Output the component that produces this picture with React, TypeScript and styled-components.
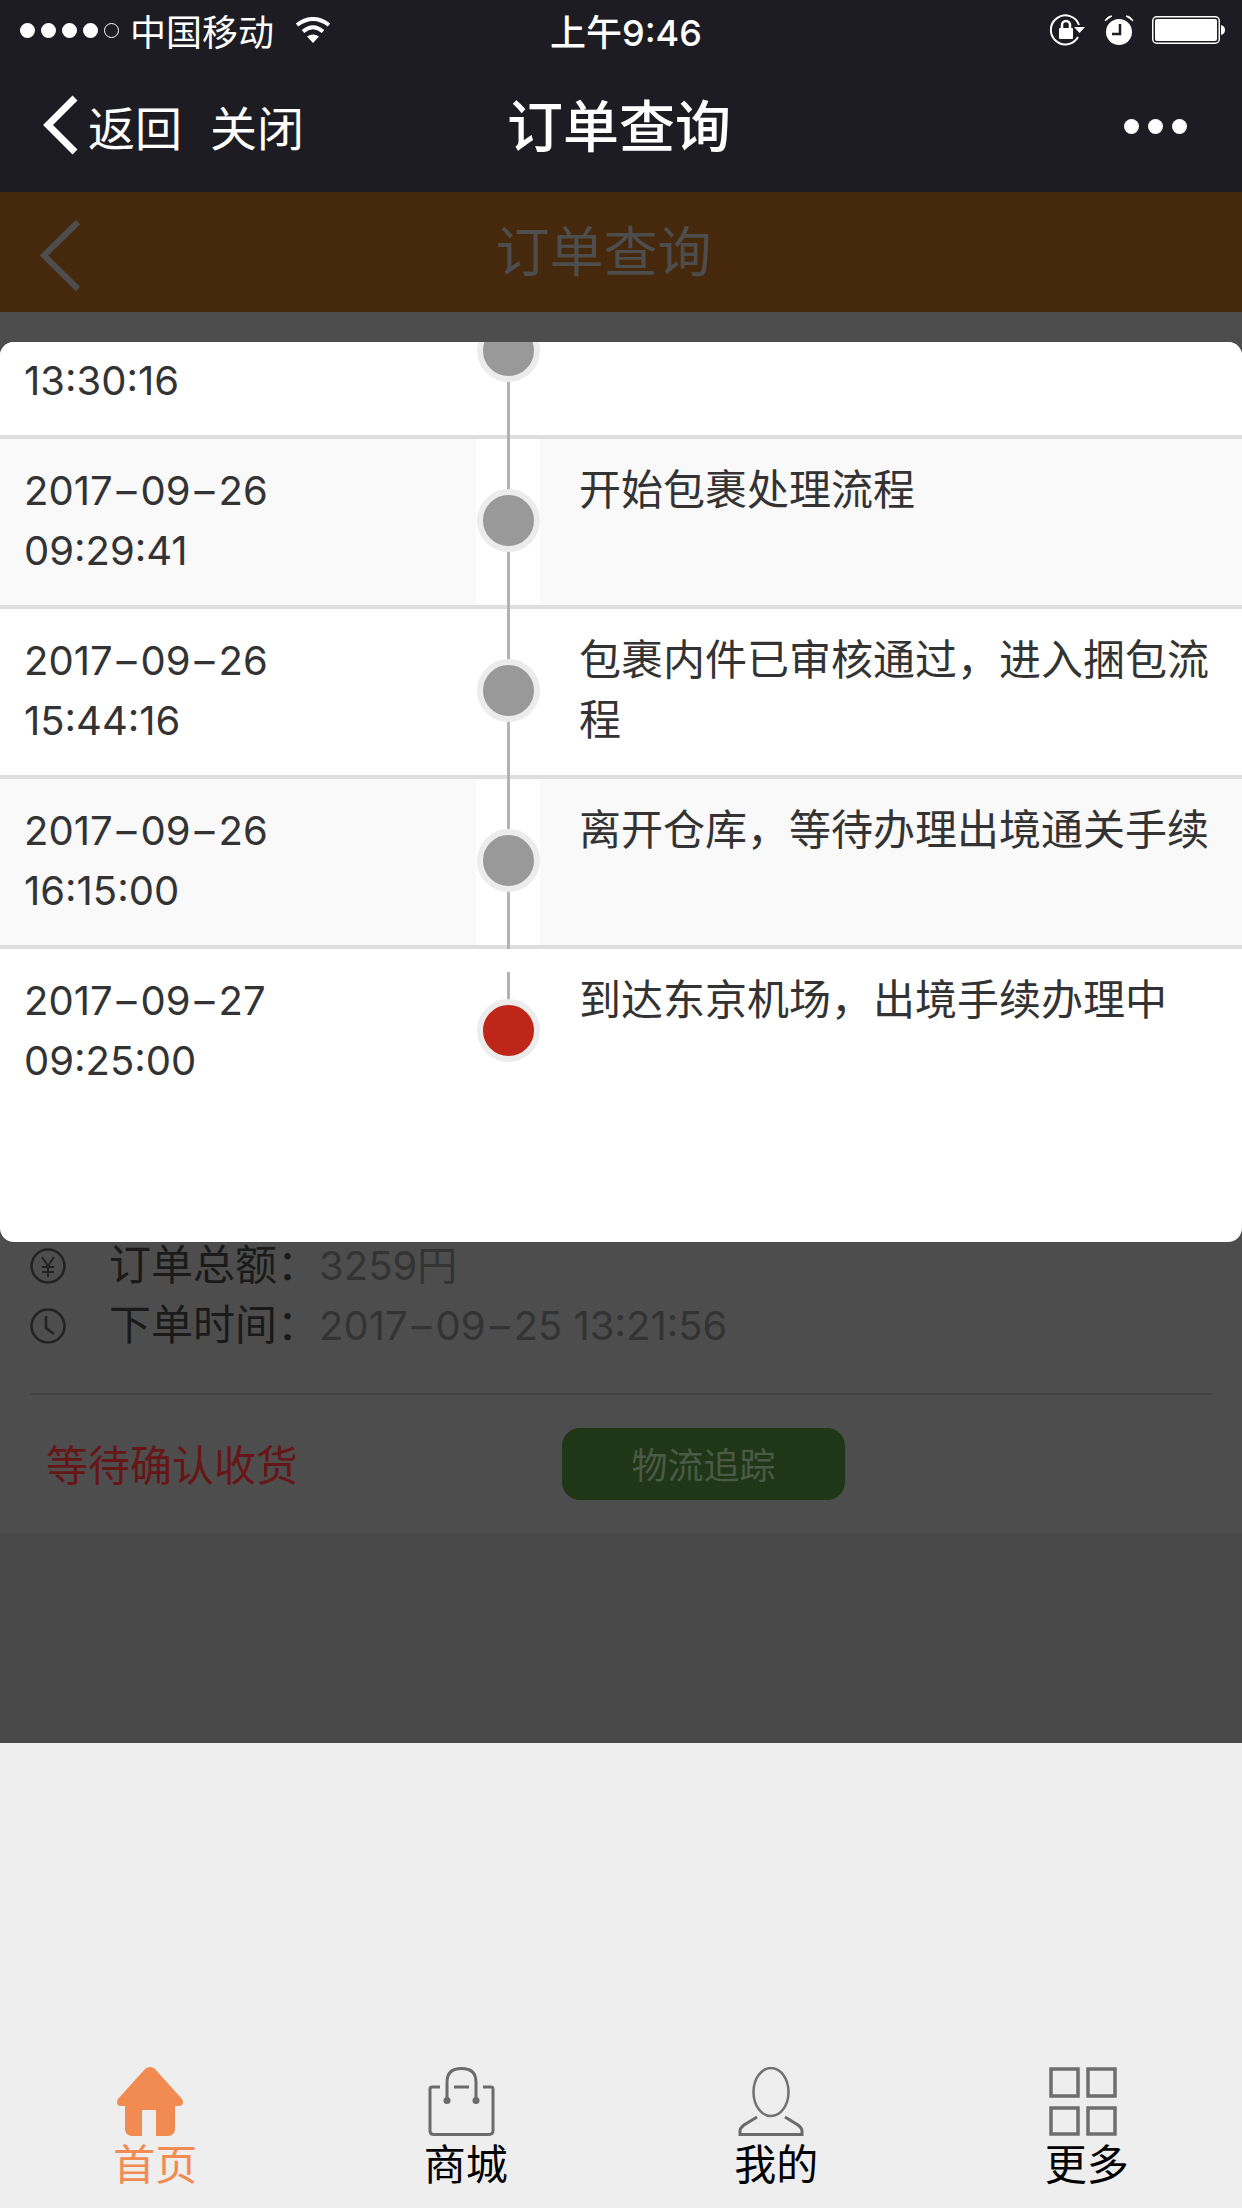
import React from 'react'
import styled, { createGlobalStyle } from 'styled-components'

type TrackItem = {
  date?: string
  time: string
  text?: string
}

const TRACKS: TrackItem[] = [
  { time: '13:30:16' },
  { date: '2017–09–26', time: '09:29:41', text: '开始包裹处理流程' },
  { date: '2017–09–26', time: '15:44:16', text: '包裹内件已审核通过\uFF0C进入捆包流程' },
  { date: '2017–09–26', time: '16:15:00', text: '离开仓库\uFF0C等待办理出境通关手续' },
  { date: '2017–09–27', time: '09:25:00', text: '到达东京机场\uFF0C出境手续办理中' },
]

const GlobalStyle = createGlobalStyle`
  html, body {
    margin: 0;
    padding: 0;
    background: #eeeeee;
  }

  * {
    box-sizing: border-box;
  }
`

const Page = styled.div`
  position: relative;
  display: flex;
  flex-direction: column;
  width: 1242px;
  height: 2208px;
  overflow: hidden;
  font-family: 'Liberation Sans', 'Noto Sans CJK SC', sans-serif;
`

const TopChrome = styled.div`
  background: #1c1c22;
  color: #ffffff;
`

const StatusBar = styled.div`
  display: grid;
  grid-template-columns: 550px 154px 1fr;
  align-items: center;
  height: 60px;
  font-size: 36px;
`

const Carrier = styled.div`
  display: flex;
  align-items: center;
  padding-left: 20px;
`

const Signal = styled.div`
  display: flex;
  gap: 6px;
  margin-right: 11px;
`

const SignalDot = styled.span<{ $empty?: boolean }>`
  width: 15px;
  height: 15px;
  border-radius: 50%;
  border: ${(p) => (p.$empty ? '1.5px' : '2px')} solid #ffffff;
  background: ${(p) => (p.$empty ? 'transparent' : '#ffffff')};
`

const WifiIcon = styled.svg`
  width: 36px;
  height: 26px;
  margin-left: 21px;
`

const Clock = styled.div`
  font-family: Inter, 'Noto Sans CJK SC', sans-serif;
  font-weight: 500;
  white-space: nowrap;
`

const StatusIcons = styled.div`
  display: flex;
  justify-content: flex-end;
  align-items: center;
  gap: 18px;
  padding-right: 17px;
`

const NavBar = styled.div`
  display: grid;
  grid-template-columns: 507px auto 1fr;
  align-items: center;
  height: 132px;
`

const NavLeft = styled.div`
  display: flex;
  align-items: center;
  padding-left: 42px;
  padding-bottom: 2px;
  font-size: 47px;
`

const NavLink = styled.span`
  margin-left: 28px;

  &:first-of-type {
    margin-left: 10px;
  }
`

const NavTitle = styled.div`
  padding-bottom: 8px;
  font-size: 56px;
  font-weight: 500;
`

const NavMore = styled.div`
  display: flex;
  justify-content: flex-end;
  gap: 9px;
  padding-right: 55px;
`

const MoreDot = styled.span`
  width: 15px;
  height: 15px;
  border-radius: 50%;
  background: #ffffff;
`

const OrderHeader = styled.div`
  display: flex;
  align-items: center;
  height: 120px;
  padding-left: 39px;
  background: #46290c;
`

const BackChevron = styled.svg`
  margin-top: 6px;
`

const OrderHeaderTitle = styled.div`
  flex: 1;
  padding-right: 116px;
  padding-bottom: 8px;
  text-align: center;
  font-size: 54px;
  color: #4d4d4d;
`

const OrderCard = styled.div`
  display: flex;
  flex-direction: column;
  justify-content: flex-end;
  height: 1221px;
  padding: 0 30px;
  background: #4d4d4d;
`

const InfoRow = styled.div`
  display: flex;
  align-items: center;
  height: 60px;
  font-size: 42px;
  line-height: 60px;
  white-space: nowrap;
`

const InfoIcon = styled.svg`
  width: 36px;
  height: 36px;
  margin-right: 43px;
`

const InfoLabel = styled.span`
  color: #1a1a1a;
`

const InfoValue = styled.span`
  font-family: Inter, 'Noto Sans CJK SC', sans-serif;
  font-size: 40px;
  color: #333333;
`

const Divider = styled.div`
  height: 2px;
  margin-top: 37px;
  background: #444444;
`

const OrderFooter = styled.div`
  display: flex;
  align-items: center;
  padding: 33px 0 33px 16px;
`

const OrderStatus = styled.div`
  width: 516px;
  padding-bottom: 3px;
  font-size: 42px;
  color: #661616;
`

const TrackButton = styled.div`
  display: flex;
  align-items: center;
  justify-content: center;
  width: 283px;
  height: 72px;
  padding-bottom: 3px;
  border-radius: 18px;
  background: #1f3617;
  color: #4b5a45;
  font-size: 36px;
`

const PageFill = styled.div`
  flex: 1;
  background: #484848;
`

const TabBar = styled.div`
  display: grid;
  grid-template-columns: repeat(4, 1fr);
  height: 465px;
  padding-top: 324px;
  background: #eeeeee;
`

const TabItem = styled.div<{ $active?: boolean }>`
  display: flex;
  flex-direction: column;
  align-items: center;
  color: ${(p) => (p.$active ? '#f28b52' : '#000000')};
  font-size: 42px;
  line-height: 60px;
`

const TabIcon = styled.svg`
  display: block;
  width: 68px;
  height: 69px;
  margin-right: 8px;
`

const Modal = styled.div`
  position: absolute;
  top: 342px;
  left: 0;
  right: 0;
  height: 900px;
  overflow: hidden;
  border-radius: 14px;
  background: #ffffff;
`

const TrackList = styled.div`
  margin-top: -73px;
`

const TrackRow = styled.div<{ $shaded: boolean; $last: boolean }>`
  display: grid;
  grid-template-columns: 476px 64px 1fr;
  height: 170px;
  border-bottom: ${(p) => (p.$last ? 'none' : '4px solid #dedede')};
  background: ${(p) => (p.$shaded ? '#f9f9f9' : '#ffffff')};
  color: #333333;
  font-size: 42px;
  line-height: 60px;
`

const TrackTime = styled.div`
  padding: 22px 0 0 24px;
  font-family: Inter, 'Noto Sans CJK SC', sans-serif;
  font-size: 40px;
`

const Rail = styled.div<{ $last: boolean }>`
  position: relative;
  display: flex;
  justify-content: center;
  padding-top: 50px;
  background: #ffffff;

  &::before {
    content: '';
    position: absolute;
    left: 31px;
    top: ${(p) => (p.$last ? '23px' : '0')};
    bottom: ${(p) => (p.$last ? 'auto' : '-4px')};
    height: ${(p) => (p.$last ? '30px' : 'auto')};
    width: 3px;
    background: #b2b2b2;
  }
`

const RailDot = styled.span<{ $current: boolean }>`
  position: relative;
  width: 63px;
  height: 63px;
  border-radius: 50%;
  border: 6px solid #ececec;
  background: ${(p) => (p.$current ? '#bd2618' : '#999999')};
`

const TrackText = styled.div`
  padding: 22px 0 0 39px;
`

const Dash = styled.span`
  margin: 0 4px;
`

const DateText: React.FC<{ value?: string }> = ({ value = '' }) => (
  <>
    {value.split('–').map((part, i) => (
      <React.Fragment key={i}>
        {i > 0 && <Dash>–</Dash>}
        {part}
      </React.Fragment>
    ))}
  </>
)

const App: React.FC = () => (
  <Page>
    <GlobalStyle />
    <TopChrome>
      <StatusBar>
        <Carrier>
          <Signal>
            <SignalDot />
            <SignalDot />
            <SignalDot />
            <SignalDot />
            <SignalDot $empty />
          </Signal>
          中国移动
          <WifiIcon viewBox="0 0 36 26">
            <path d="M2 8Q18-4 34 8" fill="none" stroke="#fff" strokeWidth="4" />
            <path d="M8 14.500Q18 6 28 14.500" fill="none" stroke="#fff" strokeWidth="4" />
            <path d="M12 19.500Q18 15.500 24 19.500L18 26Z" fill="#fff" />
          </WifiIcon>
        </Carrier>
        <Clock>上午9:46</Clock>
        <StatusIcons>
          <svg width="36" height="32" viewBox="0 0 36 32">
            <path d="M28 23A14.500 14.500 0 1 1 29 11" fill="none" stroke="#fff" strokeWidth="2" />
            <path d="M24 13H35L29.500 19Z" fill="#fff" />
            <rect x="9" y="14" width="14" height="11" rx="1" fill="#fff" />
            <path d="M12 14V11A4 4 0 0 1 20 11V14" fill="none" stroke="#fff" strokeWidth="2.500" />
          </svg>
          <svg width="30" height="32" viewBox="0 0 30 32">
            <circle cx="15" cy="18" r="13" fill="#fff" />
            <path d="M16 10V20H8" fill="none" stroke="#1c1c22" strokeWidth="2.500" />
            <path d="M1 7Q3 2 8 2ZM29 7Q27 2 22 2Z" fill="#fff" stroke="#fff" strokeWidth="1" />
          </svg>
          <svg width="73" height="30" viewBox="0 0 73 30">
            <rect x="0.750" y="1.750" width="66.500" height="26.500" rx="4" fill="none" stroke="#fff" strokeWidth="1.500" />
            <rect x="3" y="4" width="62" height="22" rx="2" fill="#fff" />
            <path d="M69 10Q73 11 73 15Q73 19 69 20Z" fill="#fff" />
          </svg>
        </StatusIcons>
      </StatusBar>
      <NavBar>
        <NavLeft>
          <svg width="36" height="60" viewBox="0 0 36 60">
            <path d="M33 3L6 30L33 57" fill="none" stroke="#fff" strokeWidth="7" />
          </svg>
          <NavLink>返回</NavLink>
          <NavLink>关闭</NavLink>
        </NavLeft>
        <NavTitle>订单查询</NavTitle>
        <NavMore>
          <MoreDot />
          <MoreDot />
          <MoreDot />
        </NavMore>
      </NavBar>
    </TopChrome>

    <OrderHeader>
      <BackChevron width="42" height="71" viewBox="0 0 42 71">
        <path d="M39 2L5 35.500L39 69" fill="none" stroke="#4d4d4d" strokeWidth="6" />
      </BackChevron>
      <OrderHeaderTitle>订单查询</OrderHeaderTitle>
    </OrderHeader>

    <OrderCard>
      <InfoRow>
        <InfoIcon viewBox="0 0 36 36">
          <circle cx="18" cy="18" r="16.500" fill="none" stroke="#222" strokeWidth="2.500" />
          <path d="M12 9L18 18L24 9M18 18V29M12 19H24M12 24H24" fill="none" stroke="#222" strokeWidth="2" />
        </InfoIcon>
        <InfoLabel>订单总额{'\uFF1A'}</InfoLabel>
        <InfoValue>3259円</InfoValue>
      </InfoRow>
      <InfoRow>
        <InfoIcon viewBox="0 0 36 36">
          <circle cx="18" cy="18" r="16.500" fill="none" stroke="#222" strokeWidth="2.500" />
          <path d="M16 8V20L24 26" fill="none" stroke="#222" strokeWidth="2.500" />
        </InfoIcon>
        <InfoLabel>下单时间{'\uFF1A'}</InfoLabel>
        <InfoValue>
          <DateText value="2017–09–25" /> 13:21:56
        </InfoValue>
      </InfoRow>
      <Divider />
      <OrderFooter>
        <OrderStatus>等待确认收货</OrderStatus>
        <TrackButton>物流追踪</TrackButton>
      </OrderFooter>
    </OrderCard>
    <PageFill />

    <TabBar>
      <TabItem $active>
        <TabIcon viewBox="0 0 68 69">
          <path
            d="M33 0C35 0 37 1 38 2L65 32C67 35 66 39 62 39H58V62C58 66 55 69 51 69H39V43H25V69H15C11 69 8 66 8 62V39H4C0 39-1 35 1 32L28 2C29 1 31 0 33 0Z"
            fill="#f28b52"
          />
        </TabIcon>
        首页
      </TabItem>
      <TabItem>
        <TabIcon viewBox="0 0 68 69">
          <path
            d="M12 20H4Q2 20 2 22V64Q2 67.500 6 67.500H60Q65 67.500 65 64V22Q65 20 63 20H55M26 20H41"
            fill="none"
            stroke="#6b6b6b"
            strokeWidth="3"
          />
          <path d="M19 33V15Q19 1.500 33.500 1.500Q48 1.500 48 15V33" fill="none" stroke="#6b6b6b" strokeWidth="3" />
          <circle cx="19" cy="33.500" r="3.500" fill="#6b6b6b" />
          <circle cx="48" cy="33.500" r="3.500" fill="#6b6b6b" />
        </TabIcon>
        商城
      </TabItem>
      <TabItem>
        <TabIcon viewBox="0 0 68 69">
          <ellipse cx="33" cy="25" rx="17.500" ry="24" fill="none" stroke="#727272" strokeWidth="2.500" />
          <path
            d="M19 50L6 58Q2 61 2 64V67.500H64V64Q64 61 60 58L47 50"
            fill="none"
            stroke="#6b6b6b"
            strokeWidth="3"
          />
        </TabIcon>
        我的
      </TabItem>
      <TabItem>
        <TabIcon viewBox="0 0 68 69">
          <path
            d="M2 2H29V29H2ZM39 2H66V29H39ZM2 41H29V67H2ZM39 41H66V67H39Z"
            fill="none"
            stroke="#6e6e6e"
            strokeWidth="3.500"
          />
        </TabIcon>
        更多
      </TabItem>
    </TabBar>

    <Modal>
      <TrackList>
        {TRACKS.map((item, i) => {
          const last = i === TRACKS.length - 1
          return (
            <TrackRow key={item.time} $shaded={i % 2 === 1} $last={last}>
              <TrackTime>
                <DateText value={item.date} />
                <br />
                {item.time}
              </TrackTime>
              <Rail $last={last}>
                <RailDot $current={last} />
              </Rail>
              <TrackText>{item.text}</TrackText>
            </TrackRow>
          )
        })}
      </TrackList>
    </Modal>
  </Page>
)

export default App
